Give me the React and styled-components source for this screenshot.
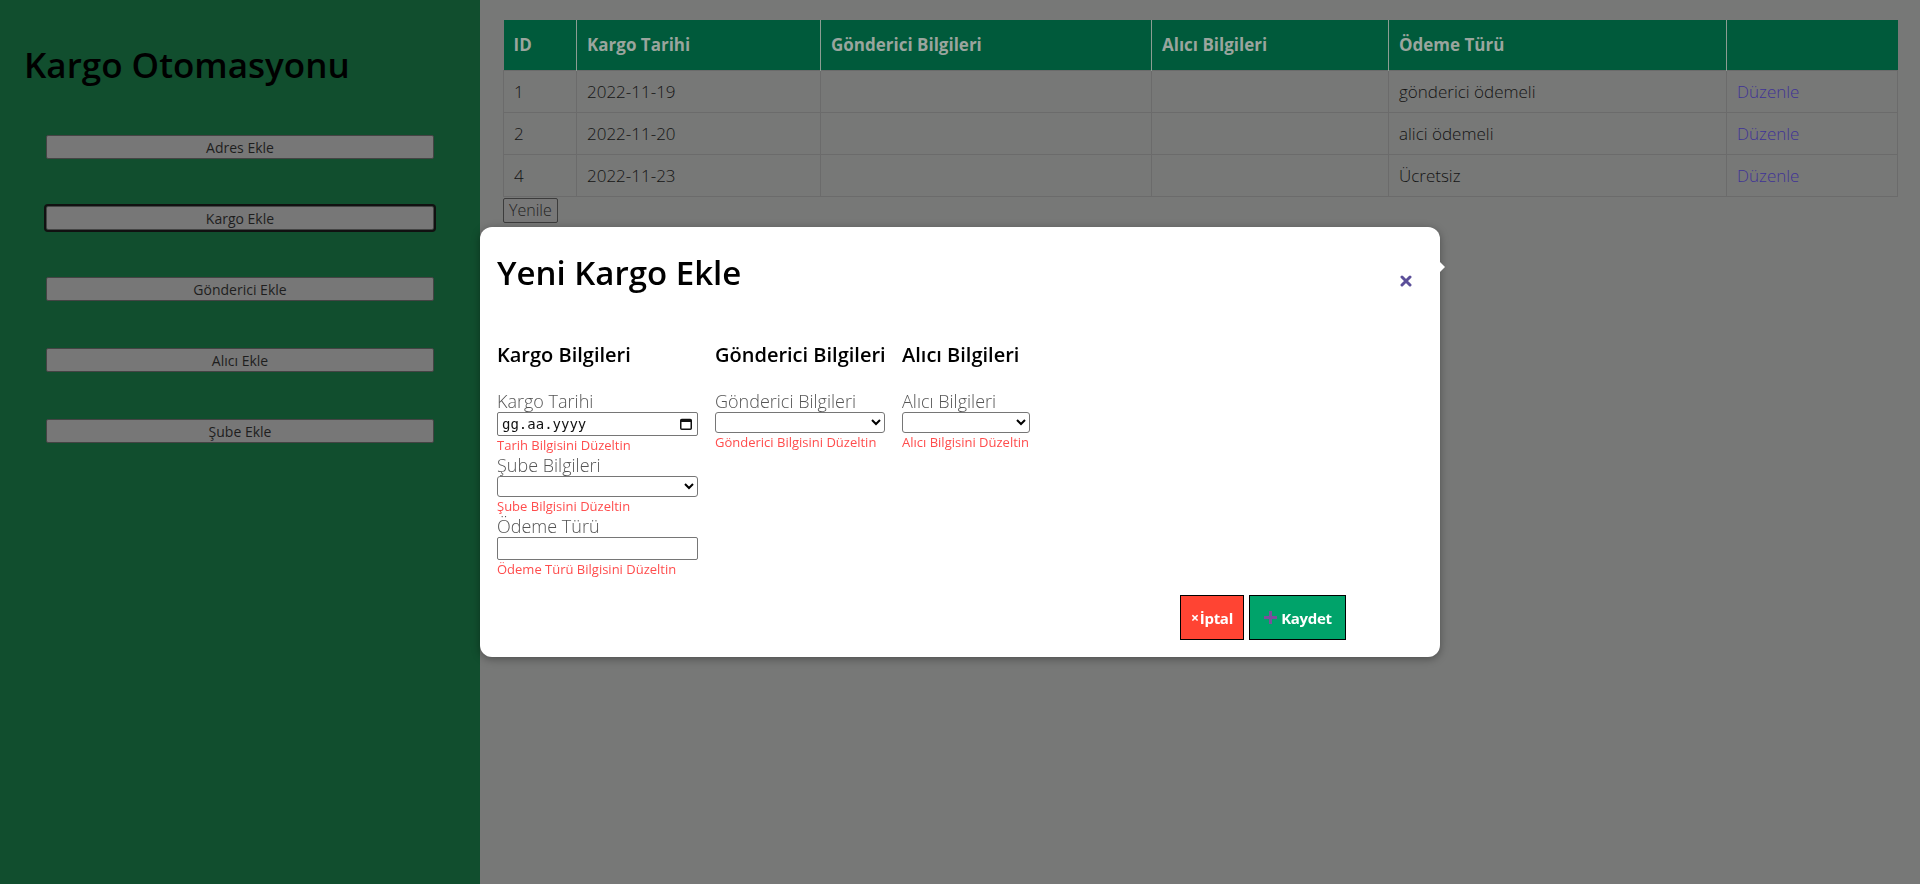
import React from "react";
import styled, { createGlobalStyle } from "styled-components";

const GlobalStyle = createGlobalStyle`
  body {
    margin: 0;
    font-family: "Open Sans", "Noto Sans", sans-serif;
  }
  * {
    box-sizing: border-box;
  }
`;

const Layout = styled.div`
  display: flex;
  min-height: 100vh;
`;

const Sidebar = styled.aside`
  width: 480px;
  flex-shrink: 0;
  background: #114e2e;
  padding-left: 24px;
`;

const Brand = styled.h1`
  margin: 42px 0 0 0;
  font-size: 35px;
  line-height: 46px;
  font-weight: 600;
  color: #000;
`;

const Menu = styled.nav`
  display: flex;
  flex-direction: column;
  gap: 47px;
  margin: 47px 0 0 22px;
`;

const MenuButton = styled.button`
  width: 388px;
  height: 24px;
  background: #777777;
  border: 1px solid #444;
  border-radius: 2px;
  font-family: "Open Sans", sans-serif;
  font-size: 14px;
  color: #1e1e1e;
  cursor: pointer;
  outline: ${(p) => (p.focused ? "2px solid #111" : "none")};
  outline-offset: 0;
`;

const Main = styled.main`
  flex: 1;
  background: #777877;
  padding: 20px 23px;
`;

const Table = styled.table`
  width: 100%;
  border-collapse: collapse;
  table-layout: fixed;
`;

const HeadCell = styled.th`
  height: 50px;
  background: #005a3b;
  color: #9aa59e;
  font-size: 17px;
  font-weight: 700;
  text-align: left;
  padding: 0 10px;
  border-left: 1px solid #8c9c92;
  &:first-child {
    border-left: none;
  }
`;

const Cell = styled.td`
  height: 42px;
  padding: 0 10px;
  font-size: 17px;
  font-weight: 300;
  color: #141414;
  border: 1px solid #6b6b6b;
`;

const EditLink = styled.a`
  color: #3f3396;
  text-decoration: none;
  cursor: pointer;
`;

const RefreshButton = styled.button`
  margin-top: 1px;
  height: 25px;
  padding: 0 5px;
  background: #787878;
  border: 1px solid #3c3c3c;
  border-radius: 2px;
  font-family: "Open Sans", sans-serif;
  font-size: 16px;
  font-weight: 300;
  color: #222;
`;

const Backdrop = styled.div`
  position: fixed;
  inset: 0;
  display: flex;
  align-items: center;
  justify-content: center;
`;

const Modal = styled.div`
  position: relative;
  width: 960px;
  height: 430px;
  background: #fff;
  border-radius: 12px;
  box-shadow: 0 2px 8px rgba(0, 0, 0, 0.35);
  padding: 0 17px 17px;
  display: flex;
  flex-direction: column;
  &::after {
    content: "";
    position: absolute;
    right: -5px;
    top: 35px;
    border-top: 5px solid transparent;
    border-bottom: 5px solid transparent;
    border-left: 5px solid #fff;
  }
`;

const ModalHeader = styled.div`
  display: flex;
  align-items: center;
  justify-content: space-between;
  margin-top: 26px;
`;

const ModalTitle = styled.h2`
  margin: 0;
  font-size: 33px;
  line-height: 40px;
  font-weight: 600;
  color: #000;
`;

const CloseButton = styled.button`
  display: flex;
  margin: 16px 11px 0 0;
  padding: 0;
  background: none;
  border: none;
  cursor: pointer;
`;

const Sections = styled.div`
  display: flex;
  gap: 17px;
  margin-top: 50px;
`;

const Section = styled.div`
  width: ${(p) => p.w}px;
  display: flex;
  flex-direction: column;
`;

const SectionTitle = styled.h3`
  margin: 0 0 23px;
  font-size: 20px;
  line-height: 24px;
  font-weight: 600;
  color: #000;
  white-space: nowrap;
`;

const Label = styled.label`
  font-size: 18px;
  line-height: 22px;
  font-weight: 300;
  color: #555;
  white-space: nowrap;
`;

const ErrorText = styled.span`
  font-size: 13px;
  line-height: 18px;
  color: #ff4d4d;
  white-space: nowrap;
`;

const DateBox = styled.div`
  display: flex;
  align-items: center;
  height: 24px;
  border: 1px solid #767676;
  border-radius: 2px;
  padding: 0 5px 0 4px;
`;

const DateInput = styled.input`
  flex: 1;
  min-width: 0;
  border: none;
  outline: none;
  padding: 0;
  font-family: "DejaVu Sans Mono", monospace;
  font-size: 14px;
  color: #111;
  &::placeholder {
    color: #111;
  }
`;

const Select = styled.select`
  width: 100%;
  height: 21px;
  border: 1px solid #767676;
  border-radius: 3px;
  background: #fff;
  font-family: "Open Sans", sans-serif;
  font-size: 13px;
`;

const TextInput = styled.input`
  width: 100%;
  height: 23px;
  border: 1px solid #767676;
  border-radius: 2px;
  padding: 0 4px;
`;

const Footer = styled.div`
  margin-top: auto;
  display: flex;
  justify-content: flex-end;
  gap: 5px;
  padding-right: 77px;
`;

const ActionButton = styled.button`
  display: flex;
  align-items: center;
  justify-content: center;
  gap: ${(p) => p.gap || 0}px;
  width: ${(p) => p.w}px;
  height: 45px;
  background: ${(p) => p.bg};
  border: 1px solid #000;
  color: #fff;
  font-family: "Open Sans", sans-serif;
  font-size: 15px;
  font-weight: 700;
  letter-spacing: -0.3px;
  cursor: pointer;
`;

const Times = styled.span`
  font-size: 14px;
  margin-right: 1px;
`;

const CalendarIcon = () => (
  <svg width="12" height="12" viewBox="0 0 12 12">
    <rect x="0.75" y="1.5" width="10.5" height="9.75" rx="1" fill="none" stroke="#111" strokeWidth="1.5" />
    <rect x="0.75" y="1.5" width="10.5" height="2.5" fill="#111" />
  </svg>
);

const CloseIcon = () => (
  <svg width="12" height="12" viewBox="0 0 12 12">
    <path d="M2 2 L10 10 M10 2 L2 10" stroke="#5b4f99" strokeWidth="3" strokeLinecap="round" />
  </svg>
);

const PlusIcon = () => (
  <svg width="15" height="15" viewBox="0 0 15 15">
    <path d="M7.5 1 V14 M1 7.5 H14" stroke="#7b4f9c" strokeWidth="3" />
  </svg>
);

const menuItems = ["Adres Ekle", "Kargo Ekle", "Gönderici Ekle", "Alıcı Ekle", "Şube Ekle"];

const cargos = [
  { id: 1, date: "2022-11-19", payment: "gönderici ödemeli" },
  { id: 2, date: "2022-11-20", payment: "alici ödemeli" },
  { id: 4, date: "2022-11-23", payment: "Ücretsiz" },
];

const columns = [
  { title: "ID", width: 73 },
  { title: "Kargo Tarihi", width: 244 },
  { title: "Gönderici Bilgileri", width: 331 },
  { title: "Alıcı Bilgileri", width: 237 },
  { title: "Ödeme Türü", width: 338 },
  { title: "", width: 171 },
];

const App = () => {
  return (
    <>
      <GlobalStyle />
      <Layout>
        <Sidebar>
          <Brand>Kargo Otomasyonu</Brand>
          <Menu>
            {menuItems.map((item) => (
              <MenuButton key={item} focused={item === "Kargo Ekle"}>
                {item}
              </MenuButton>
            ))}
          </Menu>
        </Sidebar>
        <Main>
          <Table>
            <colgroup>
              {columns.map((c, i) => (
                <col key={i} style={{ width: c.width }} />
              ))}
            </colgroup>
            <thead>
              <tr>
                {columns.map((c, i) => (
                  <HeadCell key={i}>{c.title}</HeadCell>
                ))}
              </tr>
            </thead>
            <tbody>
              {cargos.map((cargo) => (
                <tr key={cargo.id}>
                  <Cell>{cargo.id}</Cell>
                  <Cell>{cargo.date}</Cell>
                  <Cell></Cell>
                  <Cell></Cell>
                  <Cell>{cargo.payment}</Cell>
                  <Cell>
                    <EditLink>Düzenle</EditLink>
                  </Cell>
                </tr>
              ))}
            </tbody>
          </Table>
          <RefreshButton>Yenile</RefreshButton>
        </Main>
      </Layout>
      <Backdrop>
        <Modal>
          <ModalHeader>
            <ModalTitle>Yeni Kargo Ekle</ModalTitle>
            <CloseButton>
              <CloseIcon />
            </CloseButton>
          </ModalHeader>
          <Sections>
            <Section w={201}>
              <SectionTitle>Kargo Bilgileri</SectionTitle>
              <Label>Kargo Tarihi</Label>
              <DateBox>
                <DateInput placeholder="gg.aa.yyyy" />
                <CalendarIcon />
              </DateBox>
              <ErrorText>Tarih Bilgisini Düzeltin</ErrorText>
              <Label>Şube Bilgileri</Label>
              <Select>
                <option></option>
              </Select>
              <ErrorText>Şube Bilgisini Düzeltin</ErrorText>
              <Label>Ödeme Türü</Label>
              <TextInput />
              <ErrorText>Ödeme Türü Bilgisini Düzeltin</ErrorText>
            </Section>
            <Section w={170}>
              <SectionTitle>Gönderici Bilgileri</SectionTitle>
              <Label>Gönderici Bilgileri</Label>
              <Select>
                <option></option>
              </Select>
              <ErrorText>Gönderici Bilgisini Düzeltin</ErrorText>
            </Section>
            <Section w={128}>
              <SectionTitle>Alıcı Bilgileri</SectionTitle>
              <Label>Alıcı Bilgileri</Label>
              <Select>
                <option></option>
              </Select>
              <ErrorText>Alıcı Bilgisini Düzeltin</ErrorText>
            </Section>
          </Sections>
          <Footer>
            <ActionButton w={64} bg="#ff4433">
              <Times>×</Times>İptal
            </ActionButton>
            <ActionButton w={97} bg="#00a36a" gap={3}>
              <PlusIcon />
              Kaydet
            </ActionButton>
          </Footer>
        </Modal>
      </Backdrop>
    </>
  );
};

export default App;
